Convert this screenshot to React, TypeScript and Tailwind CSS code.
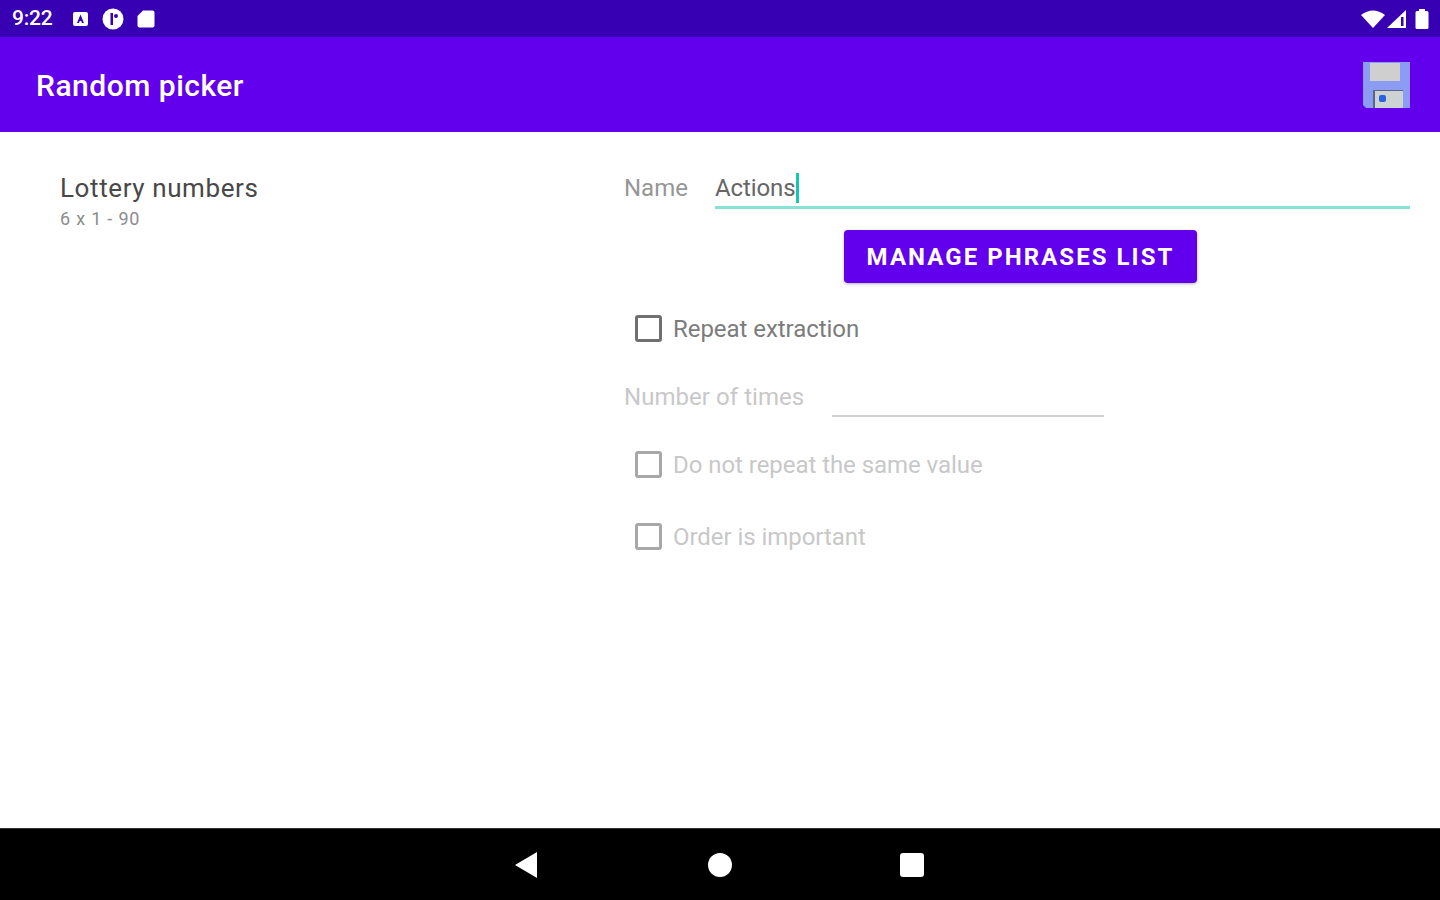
import React from "react";

function Check({ disabled, label }: { disabled?: boolean; label: string }) {
  return (
    <div className="flex items-center h-[28px] pl-[11px]">
      <div className={`w-[27px] h-[27px] mb-[2px] rounded-[3px] border-[3px] ${disabled ? "border-[#a8a8a8]" : "border-[#707070]"}`} />
      <span className={`ml-[11px] text-[24px] leading-[28px] tracking-[-0.05px] ${disabled ? "text-[#c8c8c8]" : "text-[#7c7c7c]"}`}>{label}</span>
    </div>
  );
}

export default function App() {
  return (
    <div className="w-[1440px] h-[900px] flex flex-col bg-white overflow-hidden font-['Roboto',sans-serif]">
      <div className="h-[37px] bg-[#3700b3] flex items-center pl-[12px] pr-[11px] text-white">
        <span className="text-[21px] font-medium leading-none w-[42px] tracking-[-0.2px]">9:22</span>
        <svg className="ml-[18px]" width="17" height="16" viewBox="0 0 17 16"><rect x="1" y="1" width="15" height="14" rx="2" fill="#fff" /><path d="M8.5 3.5 L5 12 H7 L7.7 10 H9.3 L10 12 H12 Z" fill="#3700b3" /></svg>
        <svg className="ml-[13px]" width="22" height="22" viewBox="0 0 22 22"><circle cx="11" cy="11" r="10.5" fill="#fff" /><path d="M8.5 5 H11 V17 H8.5 Z" fill="#3700b3" /><circle cx="14" cy="8" r="2" fill="#3700b3" /></svg>
        <svg className="ml-[13px]" width="18" height="18" viewBox="0 0 18 18"><path d="M6 0.5 H15.5 A2 2 0 0 1 17.5 2.5 V15.5 A2 2 0 0 1 15.5 17.5 H2.5 A2 2 0 0 1 0.5 15.5 V6 Z" fill="#fff" /></svg>
        <div className="flex-1" />
        <svg width="24" height="18" viewBox="0 0 24 18"><path d="M0 5 Q12 -4 24 5 L12 18 Z" fill="#fff" /></svg>
        <svg className="ml-[1px]" width="21" height="18" viewBox="0 0 21 18"><path d="M20 0 V18 H1 Z" fill="#fff" /><rect x="15" y="7" width="2.5" height="9" fill="#3700b3" /></svg>
        <svg className="ml-[8px]" width="14" height="20" viewBox="0 0 14 20"><path d="M4 0 H10 V2 H12 A1.5 1.5 0 0 1 13.5 3.5 V18.5 A1.5 1.5 0 0 1 12 20 H2 A1.5 1.5 0 0 1 0.5 18.5 V3.5 A1.5 1.5 0 0 1 2 2 H4 Z" fill="#fff" /></svg>
      </div>
      <div className="h-[95px] bg-[#6200ee] flex items-center justify-between pl-[36px] pr-[30px]">
        <span className="text-white text-[30px] font-medium leading-none tracking-[0.5px] mt-[3px]">Random picker</span>
        <svg width="47" height="47" viewBox="0 0 47 47" className="mt-[1px]">
          <path d="M0 0 H47 V46 H3 L0 43 Z" fill="#8c9cf5" />
          <rect x="7" y="1" width="30" height="18" fill="#cfcfcf" />
          <rect x="10" y="28" width="30" height="18" fill="#5a6484" />
          <rect x="12" y="29" width="28" height="17" fill="#cdd2d2" />
          <rect x="16" y="33" width="7" height="7" rx="2" fill="#2a62e0" />
        </svg>
      </div>
      <div className="flex-1 flex">
        <div className="w-[624px] pl-[60px] pt-[40px]">
          <div className="text-[26px] leading-[32px] text-[#484848] tracking-[0.6px]">Lottery numbers</div>
          <div className="text-[18px] leading-[22px] text-[#8c8c8c] mt-[4px] tracking-[0.8px]">6 x 1 - 90</div>
        </div>
        <div className="flex-1 pr-[30px] pt-[38px] flex flex-col">
          <div className="flex items-start h-[39px]">
            <span className="w-[91px] text-[24px] leading-[36px] text-[#969696]">Name</span>
            <div className="flex-1 h-[39px] border-b-[3px] border-[#86e2d4] flex items-start">
              <span className="text-[24px] leading-[36px] text-[#666] tracking-[-0.1px]">Actions</span>
              <span className="w-[3px] h-[30px] mt-[3px] bg-[#12c8b2]" />
            </div>
          </div>
          <div className="flex mt-[21px] pl-[220px]">
            <div className="w-[353px] h-[53px] rounded-[4px] bg-[#6200ee] flex items-center justify-center text-white text-[24px] font-bold tracking-[2.05px] shadow-[0_1px_3px_rgba(0,0,0,0.3)]">MANAGE PHRASES LIST</div>
          </div>
          <div className="mt-[32px]"><Check label="Repeat extraction" /></div>
          <div className="flex items-start mt-[36px]">
            <span className="w-[208px] text-[24px] leading-[36px] text-[#c8c8c8] tracking-[0.05px]">Number of times</span>
            <div className="w-[272px] h-[38px] border-b-2 border-[#d2d2d2]" />
          </div>
          <div className="mt-[34px]"><Check disabled label="Do not repeat the same value" /></div>
          <div className="mt-[44px]"><Check disabled label="Order is important" /></div>
        </div>
      </div>
      <div className="h-[72px] bg-black border-t border-[#333] flex items-center justify-center relative">
        <div className="flex items-center gap-[168px]">
          <svg width="24" height="26" viewBox="0 0 24 26" className="-ml-[2px] mr-[2px]"><path d="M23 0 V26 L1 13 Z" fill="#fff" /></svg>
          <div className="w-[24px] h-[24px] rounded-full bg-white" />
          <div className="w-[24px] h-[24px] rounded-[3px] bg-white" />
        </div>
      </div>
    </div>
  );
}
